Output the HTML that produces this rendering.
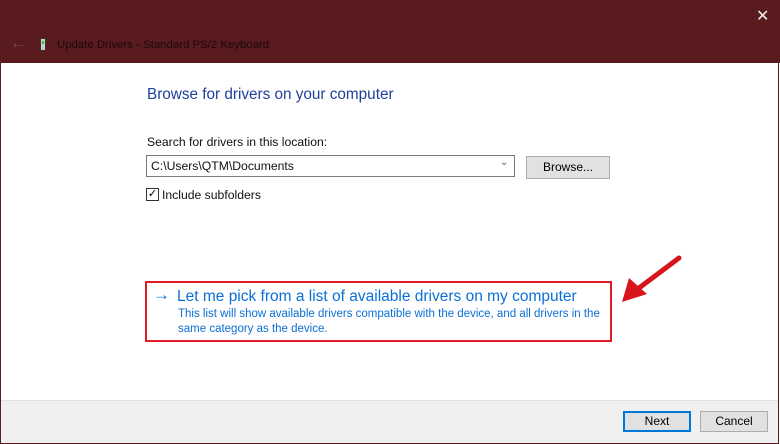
<!DOCTYPE html>
<html><head><style>
*{margin:0;padding:0;box-sizing:border-box}
body{width:780px;height:444px;background:#fff;font-family:"Liberation Sans",sans-serif;position:relative;overflow:hidden}
.win{position:absolute;left:0;top:0;width:779px;height:444px;border:1px solid #5a1b1f;border-top:none;background:#fff}
.title{position:absolute;left:0;top:0;width:780px;height:63px;background:#5a1b1f}
.t{position:absolute;font-size:12.2px;color:#111;white-space:nowrap}
.footer{position:absolute;left:1px;top:400px;width:777px;height:43px;background:#f0f0f0;border-top:1px solid #e0e0e0}
.btn{position:absolute;height:21px;background:#e1e1e1;border:1px solid #adadad;font-size:12px;text-align:center;line-height:19px;color:#000}
</style></head><body>
<div class="win"></div>
<div class="title"></div>
<div class="t" style="left:10px;top:35px;color:#7a4a4d;font-size:16px">&#8592;</div>
<div style="position:absolute;left:40px;top:38px;width:6px;height:13px;background:#ccc;border:1px solid #333"><div style="width:2px;height:3px;background:#2c2;margin:2px 1px"></div></div>
<div class="t" style="left:57px;top:39px;color:#1a0a0a;font-size:11.4px">Update Drivers - Standard PS/2 Keyboard</div>
<div class="t" style="left:756px;top:6px;color:#eee;font-size:16px">&#10005;</div>
<div class="t" style="left:147px;top:86px;font-size:15.3px;color:#1e3f9c">Browse for drivers on your computer</div>
<div class="t" style="left:147px;top:135px">Search for drivers in this location:</div>
<div style="position:absolute;left:146px;top:155px;width:369px;height:22px;border:1px solid #7a7a7a;background:#fff"></div>
<div class="t" style="left:151px;top:159px">C:\Users\QTM\Documents</div>
<div class="t" style="left:500px;top:157px;color:#555;font-size:10px">&#8964;</div>
<div class="btn" style="left:526px;top:156px;width:84px;height:23px;line-height:21px">Browse...</div>
<div style="position:absolute;left:146px;top:188px;width:13px;height:13px;border:1px solid #333;font-size:11px;line-height:11px;text-align:center">&#10003;</div>
<div class="t" style="left:162px;top:188px">Include subfolders</div>
<div style="position:absolute;left:145px;top:281px;width:467px;height:61px;border:2px solid #e01b24"></div>
<div class="t" style="left:153px;top:285px;font-size:17px;color:#0a6fd6">&#8594;</div>
<div class="t" style="left:177px;top:288px;font-size:15.5px;color:#0a6fd6">Let me pick from a list of available drivers on my computer</div>
<div class="t" style="left:178px;top:307px;font-size:11.5px;color:#0a6fd6;line-height:15px;width:440px;white-space:normal">This list will show available drivers compatible with the device, and all drivers in the<br>same category as the device.</div>
<svg style="position:absolute;left:615px;top:252px" width="70" height="55"><line x1="64" y1="6" x2="24" y2="36" stroke="#d9151c" stroke-width="5" stroke-linecap="round"/><polygon points="7,50 14,26 32,42" fill="#d9151c"/></svg>
<div class="footer"></div>
<div class="btn" style="left:623px;top:411px;width:68px;border:1px solid #0078d7;box-shadow:inset 0 0 0 1px #0078d7">Next</div>
<div class="btn" style="left:700px;top:411px;width:68px">Cancel</div>
</body></html>
